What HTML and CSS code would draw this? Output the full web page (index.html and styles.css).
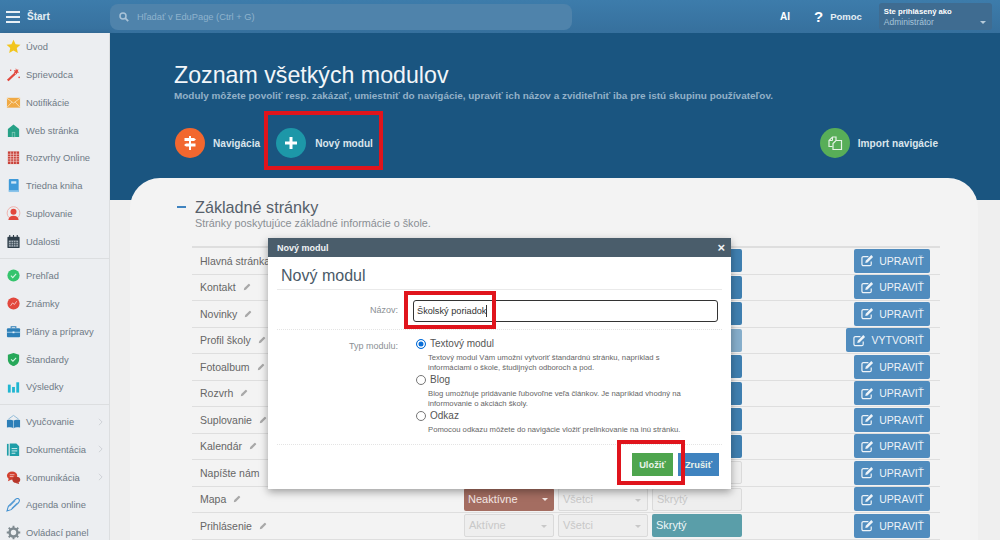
FILE: index.html
```html
<!DOCTYPE html>
<html lang="sk">

<head>
    <meta charset="UTF-8">
    <meta name="viewport" content="width=device-width, initial-scale=1.0">
    <title>Zoznam všetkých modulov</title>
    <link rel="stylesheet" href="styles.css">
</head>

<body>
    <svg class="defs" width="0" height="0">
        <symbol id="pencil" viewBox="0 0 10 10">
            <path d="M1 9l.6-2.6L6.8 1.2a.8.8 0 0 1 1.1 0l.9.9a.8.8 0 0 1 0 1.1L3.6 8.4z" fill="currentColor" />
        </symbol>
        <symbol id="edit" viewBox="0 0 14 14">
            <path d="M11 8v3a1.6 1.6 0 0 1-1.6 1.6H2.6A1.6 1.6 0 0 1 1 11V4.4a1.6 1.6 0 0 1 1.6-1.6H8" fill="none" stroke="currentColor" stroke-width="1.3" />
            <path d="M4.6 9.6l.5-2.4 6-6 1.9 1.9-6 6z" fill="currentColor" />
        </symbol>
        <symbol id="chev" viewBox="0 0 6 10">
            <path d="M1 1l4 4-4 4" fill="none" stroke="currentColor" stroke-width="1" />
        </symbol>
    </svg>

    <div class="page">
        <header class="topbar">
            <div class="brand">
                <span class="burger"><i></i><i></i><i></i></span>
                <span class="brand-name">Štart</span>
            </div>
            <div class="search">
                <svg width="10" height="10" viewBox="0 0 10 10">
                    <circle cx="4" cy="4" r="3" fill="none" stroke="#a9c3d8" stroke-width="1.5" />
                    <path d="M6.2 6.2L9.2 9.2" stroke="#a9c3d8" stroke-width="1.8" />
                </svg>
                <span>Hľadať v EduPage (Ctrl + G)</span>
            </div>
            <span class="top-ai">AI</span>
            <span class="top-q">?</span>
            <span class="top-help">Pomoc</span>
            <div class="user">
                <b>Ste prihlásený ako</b>
                <span>Administrátor</span>
                <em class="user-caret"></em>
            </div>
        </header>

        <div class="layout">
            <nav class="side">
                <div class="side-group">
                    <a class="side-item">
                        <svg viewBox="0 0 16 16"><path d="M8 .8l2.2 4.8 5.2.6-3.9 3.5 1.1 5.2L8 12.3l-4.6 2.6 1.1-5.2L.6 6.2l5.2-.6z" fill="#f2c51d" /></svg>
                        Úvod
                    </a>
                    <a class="side-item">
                        <svg viewBox="0 0 16 16"><path d="M1 13.6L9 6l1.7 1.7L2.7 15.3z" fill="#e2483d" /><path d="M10.5 1l.8 2 2-.4-.8 2 1.6 1.3-2.1.2-.6 2-1.2-1.7-2.1.3 1.2-1.7-1-1.9 2 .6z" fill="#e2483d" /><circle cx="14" cy="11" r=".9" fill="#e2483d" /><circle cx="5" cy="3.5" r=".8" fill="#e2483d" /></svg>
                        Sprievodca
                    </a>
                    <a class="side-item">
                        <svg viewBox="0 0 16 16"><rect x="1" y="3" width="14" height="10.5" fill="#f0a944" /><path d="M1 3.4l7 5.2 7-5.2M1 13.2l5.2-5.6M15 13.2L9.8 7.6" fill="none" stroke="#fbe3bd" stroke-width=".9" /></svg>
                        Notifikácie
                    </a>
                    <a class="side-item">
                        <svg viewBox="0 0 16 16"><path d="M8 1.5l6 5V15H2V6.5z" fill="#27a187" /><rect x="6.2" y="9.5" width="3.6" height="5.5" fill="#7cc8b6" /><rect x="7.1" y="10.5" width="1.8" height="4.5" fill="#27a187" /></svg>
                        Web stránka
                    </a>
                    <a class="side-item">
                        <svg viewBox="0 0 16 16"><rect x="2" y="1.5" width="12" height="13.5" fill="#c9423a" /><path d="M2 4.5h12M2 7h12M2 9.500h12M2 12h12M5 1.5V15M8 1.5V15M11 1.5V15" stroke="#f3d3d0" stroke-width=".7" /></svg>
                        Rozvrhy Online
                    </a>
                    <a class="side-item">
                        <svg viewBox="0 0 16 16"><rect x="3" y="1" width="10.5" height="14" rx="1" fill="#3f9ad9" /><rect x="5.5" y="3.5" width="5.5" height="2.5" fill="#cfe7f7" /><rect x="3" y="13" width="10.5" height="2" fill="#8cc4ea" /></svg>
                        Triedna kniha
                    </a>
                    <a class="side-item">
                        <svg viewBox="0 0 16 16"><circle cx="8" cy="7.5" r="6.8" fill="none" stroke="#efb0aa" stroke-width="1" /><circle cx="8" cy="6" r="3.2" fill="#e2483d" /><path d="M2.5 15c.4-3 2.5-4.5 5.5-4.5s5.1 1.5 5.5 4.5z" fill="#e2483d" /></svg>
                        Suplovanie
                    </a>
                    <a class="side-item">
                        <svg viewBox="0 0 16 16"><rect x="1.5" y="3" width="13" height="12" rx="1" fill="#2e3d49" /><rect x="3" y="7" width="10" height="6.5" fill="#aab4bc" /><path d="M5.5 7v6.5M8 7v6.5M10.5 7v6.5M3 9.2h10M3 11.4h10" stroke="#2e3d49" stroke-width=".7" /><path d="M4 1v3M8 1v3M12 1v3" stroke="#2e3d49" stroke-width="1.2" /></svg>
                        Udalosti
                    </a>
                </div>
                <div class="side-group">
                    <a class="side-item">
                        <svg viewBox="0 0 16 16"><circle cx="8" cy="8" r="6.5" fill="#35c46d" /><path d="M5.2 8.2l2 2 3.6-4" fill="none" stroke="#d8f5e3" stroke-width="1.2" /></svg>
                        Prehľad
                    </a>
                    <a class="side-item">
                        <svg viewBox="0 0 16 16"><circle cx="8" cy="8" r="6.5" fill="#e2483d" /><path d="M4.8 10.4L7 7.4l2 1.6 2.4-3.4" fill="none" stroke="#f7c9c5" stroke-width="1" /></svg>
                        Známky
                    </a>
                    <a class="side-item">
                        <svg viewBox="0 0 16 16"><rect x="1" y="4.5" width="14" height="9.5" rx="1" fill="#2d7fb8" /><path d="M5.5 4.5V3h5v1.500" fill="none" stroke="#2d7fb8" stroke-width="1.1" /><path d="M1 8.8h14" stroke="#a8d0ea" stroke-width="1" /><rect x="7" y="8" width="2" height="1.8" fill="#e3f0f8" /></svg>
                        Plány a prípravy
                    </a>
                    <a class="side-item">
                        <svg viewBox="0 0 16 16"><path d="M8 1l6 2v5c0 3.5-2.5 6-6 7-3.5-1-6-3.5-6-7V3z" fill="#27a85a" /><path d="M5.4 7.8l2 2 3.4-3.6" fill="none" stroke="#d8f5e3" stroke-width="1.1" /></svg>
                        Štandardy
                    </a>
                    <a class="side-item">
                        <svg viewBox="0 0 16 16"><rect x="2" y="6" width="3" height="8.5" fill="#1fb6d1" /><rect x="6.5" y="8.5" width="3" height="6" fill="#1fb6d1" /><rect x="11" y="3.5" width="3" height="11" fill="#1fb6d1" /></svg>
                        Výsledky
                    </a>
                </div>
                <div class="side-group">
                    <a class="side-item">
                        <svg viewBox="0 0 16 16"><path d="M1 6.5c3-.8 5.500-.6 7 .6 1.5-1.2 4-1.4 7-.6v8c-3-.8-5.5-.6-7 .6-1.5-1.2-4-1.4-7-.6z" fill="#2d7fb8" /><path d="M8 7v8" stroke="#cfe3f0" stroke-width=".7" /><path d="M2.5 5.5L8 1.5l5.5 4" fill="none" stroke="#8db9d6" stroke-width="1" /></svg>
                        Vyučovanie
                        <svg class="side-chev"><use href="#chev" /></svg>
                    </a>
                    <a class="side-item">
                        <svg viewBox="0 0 16 16"><rect x="1" y="2" width="1.8" height="12.5" fill="#1f9ea8" /><path d="M4 1.5h7l3 3V15H4z" fill="#1f9ea8" /><path d="M6 7h6M6 9.5h6M6 12h4" stroke="#d5eff1" stroke-width="1" /></svg>
                        Dokumentácia
                        <svg class="side-chev"><use href="#chev" /></svg>
                    </a>
                    <a class="side-item">
                        <svg viewBox="0 0 16 16"><ellipse cx="6.5" cy="6" rx="5.5" ry="4.5" fill="#d2402f" /><path d="M3 9l-1 3 4-2z" fill="#d2402f" /><ellipse cx="11" cy="10.5" rx="4.2" ry="3.3" fill="#b8372b" /><path d="M13 13l1.5 1.8-4-1z" fill="#b8372b" /><path d="M4 5h5M4 7h4" stroke="#f7d2cd" stroke-width=".8" /></svg>
                        Komunikácia
                        <svg class="side-chev"><use href="#chev" /></svg>
                    </a>
                    <a class="side-item">
                        <svg viewBox="0 0 16 16"><path d="M1 15l1.5-5L10 2.5c1.5-1.5 3.5-1.2 4 0s.5 2.5-1 4L5.5 13.5z" fill="none" stroke="#3f8fd0" stroke-width="1.1" /><path d="M4 10l6-6M6 12l6-6" stroke="#3f8fd0" stroke-width=".8" /></svg>
                        Agenda online
                    </a>
                    <a class="side-item">
                        <svg viewBox="0 0 16 16"><circle cx="8" cy="8" r="4.2" fill="none" stroke="#7f8a90" stroke-width="2.6" /><path d="M8 .8v3M8 12.2v3M.8 8h3M12.2 8h3M2.9 2.9L5 5M11 11l2.1 2.1M13.1 2.9L11 5M5 11l-2.1 2.1" stroke="#7f8a90" stroke-width="2" /></svg>
                        Ovládací panel
                    </a>
                </div>
            </nav>

            <main class="main">
                <div class="hero">
                    <h1>Zoznam všetkých modulov</h1>
                    <p>Moduly môžete povoliť resp. zakázať, umiestniť do navigácie, upraviť ich názov a zviditeľniť iba pre istú skupinu používateľov.</p>
                    <div class="actions">
                        <a class="action">
                            <span class="action-ico orange">
                                <svg width="18" height="18" viewBox="0 0 18 18"><path d="M8 2h2v14H8z" fill="#fff" /><path d="M3.5 4H13l2 1.5L13 7H3.5zM14.5 9.5H5L3 11l2 1.5h9.5z" fill="#fff" /></svg>
                            </span>
                            Navigácia
                        </a>
                        <a class="action">
                            <span class="action-ico teal">
                                <svg width="12" height="12" viewBox="0 0 12 12"><path d="M4.5 0h3v4.5H12v3H7.5V12h-3V7.5H0v-3h4.5z" fill="#fff" /></svg>
                            </span>
                            Nový modul
                        </a>
                        <a class="action action-right">
                            <span class="action-ico green">
                                <svg width="16" height="16" viewBox="0 0 16 16"><path d="M5.5 11.5H2v-6L5.5 2H9v3.5" fill="none" stroke="#e6f3e6" stroke-width="1.2" /><path d="M5.5 2v3.500H2" fill="none" stroke="#e6f3e6" stroke-width="1" /><path d="M9 5.5h5.5v9H6v-6z" fill="none" stroke="#e6f3e6" stroke-width="1.2" /></svg>
                            </span>
                            Import navigácie
                        </a>
                    </div>
                </div>

                <section class="card">
                    <div class="sec-head">
                        <span class="sec-dash"></span>
                        <h2>Základné stránky</h2>
                    </div>
                    <p class="sec-sub">Stránky poskytujúce základné informácie o škole.</p>

                    <div class="rows">
                        <div class="row">
                            <span class="name">Hlavná stránka</span>
                            <span></span><span></span>
                            <span class="sel on"></span>
                            <a class="btn"><svg><use href="#edit" /></svg>UPRAVIŤ</a>
                        </div>
                        <div class="row">
                            <span class="name">Kontakt <svg class="pen"><use href="#pencil" /></svg></span>
                            <span></span><span></span>
                            <span class="sel on"></span>
                            <a class="btn"><svg><use href="#edit" /></svg>UPRAVIŤ</a>
                        </div>
                        <div class="row">
                            <span class="name">Novinky <svg class="pen"><use href="#pencil" /></svg></span>
                            <span></span><span></span>
                            <span class="sel on"></span>
                            <a class="btn"><svg><use href="#edit" /></svg>UPRAVIŤ</a>
                        </div>
                        <div class="row">
                            <span class="name">Profil školy <svg class="pen"><use href="#pencil" /></svg></span>
                            <span></span><span></span>
                            <span class="sel pale"></span>
                            <a class="btn"><svg><use href="#edit" /></svg>VYTVORIŤ</a>
                        </div>
                        <div class="row">
                            <span class="name">Fotoalbum <svg class="pen"><use href="#pencil" /></svg></span>
                            <span></span><span></span>
                            <span class="sel on"></span>
                            <a class="btn"><svg><use href="#edit" /></svg>UPRAVIŤ</a>
                        </div>
                        <div class="row">
                            <span class="name">Rozvrh <svg class="pen"><use href="#pencil" /></svg></span>
                            <span></span><span></span>
                            <span class="sel on"></span>
                            <a class="btn"><svg><use href="#edit" /></svg>UPRAVIŤ</a>
                        </div>
                        <div class="row">
                            <span class="name">Suplovanie <svg class="pen"><use href="#pencil" /></svg></span>
                            <span></span><span></span>
                            <span class="sel on"></span>
                            <a class="btn"><svg><use href="#edit" /></svg>UPRAVIŤ</a>
                        </div>
                        <div class="row">
                            <span class="name">Kalendár <svg class="pen"><use href="#pencil" /></svg></span>
                            <span></span><span></span>
                            <span class="sel on"></span>
                            <a class="btn"><svg><use href="#edit" /></svg>UPRAVIŤ</a>
                        </div>
                        <div class="row">
                            <span class="name">Napíšte nám</span>
                            <span></span><span></span>
                            <span class="sel off"></span>
                            <a class="btn"><svg><use href="#edit" /></svg>UPRAVIŤ</a>
                        </div>
                        <div class="row">
                            <span class="name">Mapa <svg class="pen"><use href="#pencil" /></svg></span>
                            <span class="sel danger caret">Neaktívne</span>
                            <span class="sel off caret">Všetci</span>
                            <span class="sel off">Skrytý</span>
                            <a class="btn"><svg><use href="#edit" /></svg>UPRAVIŤ</a>
                        </div>
                        <div class="row">
                            <span class="name">Prihlásenie <svg class="pen"><use href="#pencil" /></svg></span>
                            <span class="sel off caret">Aktívne</span>
                            <span class="sel off caret">Všetci</span>
                            <span class="sel hidden">Skrytý</span>
                            <a class="btn"><svg><use href="#edit" /></svg>UPRAVIŤ</a>
                        </div>
                    </div>
                </section>
            </main>
        </div>

        <!-- dialog -->
        <div class="modal">
            <div class="modal-bar">
                <span>Nový modul</span>
                <span class="modal-x">×</span>
            </div>
            <h3>Nový modul</h3>
            <div class="form-row name-row">
                <label>Názov:</label>
                <div class="field">Školský poriadok<i class="cursor"></i></div>
            </div>
            <div class="form-row type-row">
                <label>Typ modulu:</label>
                <div class="options">
                    <div class="opt">
                        <span class="radio checked"></span>
                        <div>
                            <div class="opt-title">Textový modul</div>
                            <p>Textový modul Vám umožní vytvoriť štandardnú stránku, napríklad s informáciami o škole, študijných odboroch a pod.</p>
                        </div>
                    </div>
                    <div class="opt">
                        <span class="radio"></span>
                        <div>
                            <div class="opt-title">Blog</div>
                            <p>Blog umožňuje pridávanie ľubovoľne veľa článkov. Je napríklad vhodný na informovanie o akciách školy.</p>
                        </div>
                    </div>
                    <div class="opt">
                        <span class="radio"></span>
                        <div>
                            <div class="opt-title">Odkaz</div>
                            <p>Pomocou odkazu môžete do navigácie vložiť prelinkovanie na inú stránku.</p>
                        </div>
                    </div>
                </div>
            </div>
            <div class="modal-foot">
                <a class="mbtn save">Uložiť</a>
                <a class="mbtn cancel">Zrušiť</a>
            </div>
        </div>

        <!-- red marks drawn over the screenshot -->
        <div class="mark mark-new"></div>
        <div class="mark mark-name"></div>
        <div class="mark mark-save"></div>
    </div>
</body>

</html>
```

FILE: styles.css
```css
* {
    margin: 0;
    padding: 0;
    box-sizing: border-box;
}

body {
    font-family: "Liberation Sans", Arial, sans-serif;
    background: #efefef;
}

.defs {
    position: absolute;
}

.page {
    position: relative;
    width: 1000px;
    height: 540px;
    overflow: hidden;
}

/* top bar */
.topbar {
    display: flex;
    align-items: center;
    height: 33px;
    background: linear-gradient(#3d7cab, #36709d);
    color: #fff;
}

.brand {
    display: flex;
    align-items: center;
    width: 110px;
    padding-left: 6px;
}

.burger {
    display: flex;
    flex-direction: column;
    gap: 3px;
    width: 14px;
    margin-right: 7px;
}

.burger i {
    display: block;
    height: 2px;
    background: #e8f0f6;
}

.brand-name {
    font-size: 10px;
    font-weight: bold;
    color: #e4edf3;
}

.search {
    display: flex;
    align-items: center;
    gap: 8px;
    width: 462px;
    height: 26px;
    padding-left: 9px;
    border-radius: 8px;
    background: #4f83ab;
    font-size: 9.3px;
    color: #8fb3cd;
}

.top-ai {
    margin-left: 208px;
    font-size: 10px;
    font-weight: bold;
}

.top-q {
    margin-left: 24px;
    font-size: 15px;
    font-weight: bold;
}

.top-help {
    margin-left: 7px;
    font-size: 9.5px;
    font-weight: bold;
    color: #e4edf3;
}

.user {
    position: relative;
    display: flex;
    flex-direction: column;
    justify-content: center;
    width: 113px;
    height: 27px;
    margin-left: 17px;
    padding-left: 5px;
    border-radius: 3px;
    background: #3f6c91;
    font-size: 7.7px;
    line-height: 11px;
}

.user span {
    font-size: 8.5px;
    color: #a6c4da;
}

.user-caret {
    position: absolute;
    right: 6px;
    bottom: 6px;
    border: 3px solid transparent;
    border-top: 3px solid #b7cbda;
    border-bottom: 0;
}

.layout {
    display: flex;
    height: 507px;
}

/* sidebar */
.side {
    width: 110px;
    flex: none;
    background: #eceef1;
    border-right: 1px solid #dcdee0;
    box-shadow: 1px 0 4px rgba(0, 0, 0, .12);
}

.side-group {
    padding: 3px 0;
    border-bottom: 1px solid #dcdee0;
}

.side-group:first-child {
    padding-top: 0;
}

.side-group:last-child {
    border-bottom: 0;
}

.side-item {
    display: flex;
    align-items: center;
    height: 27.75px;
    padding-left: 6px;
    font-size: 9.4px;
    color: #6f7a86;
}

.side-item > svg:first-child {
    flex: none;
    width: 15px;
    height: 15px;
    margin-right: 5px;
}

.side-chev {
    width: 5px;
    height: 8px;
    margin-left: auto;
    margin-right: 6px;
    color: #c8ccd0;
}

/* main area */
.main {
    flex: 1;
    padding: 0 22px 0 20px;
    background: linear-gradient(#1a5580 167px, #efefef 167px);
}

.hero {
    height: 145px;
    padding: 28px 0 0 44px;
}

.hero h1 {
    font-size: 23.2px;
    line-height: 28px;
    font-weight: normal;
    color: #f2f6f9;
}

.hero p {
    margin-top: 1px;
    font-size: 9.95px;
    line-height: 12px;
    font-weight: bold;
    color: #93b1c8;
}

.actions {
    display: flex;
    align-items: center;
    margin-top: 26px;
    padding-left: 1px;
}

.action {
    display: flex;
    align-items: center;
    margin-right: 16px;
    font-size: 10.1px;
    font-weight: bold;
    color: #dbe5ec;
}

.action:nth-child(2) .action-ico {
    margin-right: 9px;
}

.action-right {
    margin-left: auto;
    margin-right: 40px;
}

.action-ico {
    display: flex;
    align-items: center;
    justify-content: center;
    width: 30px;
    height: 30px;
    margin-right: 8px;
    border-radius: 50%;
}

.orange {
    background: #f2672f;
}

.teal {
    background: #1d97a8;
}

.green {
    background: #58ae58;
}

.card {
    height: 380px;
    padding: 20px 38px 0 62px;
    border-radius: 30px 30px 0 0;
    background: #f3f3f3;
}

.sec-head {
    display: flex;
    align-items: center;
    margin: 0 0 1px -15px;
}

.sec-dash {
    width: 9px;
    height: 2px;
    margin-right: 9px;
    background: #3f83bf;
}

.sec-head h2 {
    font-size: 16.2px;
    line-height: 18px;
    font-weight: normal;
    color: #56606a;
}

.sec-sub {
    margin: 0 0 17px 3px;
    font-size: 10.8px;
    line-height: 12px;
    color: #8a8f94;
}

.rows {
    border-top: 2px solid #dedede;
}

.row {
    display: grid;
    grid-template-columns: 268px 90px 90px 90px 1fr;
    column-gap: 4px;
    align-items: center;
    height: 26.5px;
    border-bottom: 1px solid #dedede;
}

.name {
    padding-left: 8px;
    font-size: 10.5px;
    color: #666;
}

.pen {
    width: 8px;
    height: 8px;
    margin-left: 4px;
    color: #a8a8a8;
}

.sel {
    position: relative;
    display: block;
    height: 23px;
    padding-left: 4px;
    border: 1px solid #dadada;
    border-radius: 2px;
    font-size: 11px;
    line-height: 21px;
}

.sel.on {
    border: 0;
    background: #3f7fb0;
}

.sel.pale {
    border: 0;
    background: #86aecb;
}

.sel.off {
    background: #eeeeee;
    color: #c8c8c8;
}

.sel.danger {
    border: 0;
    line-height: 23px;
    background: #a46d61;
    color: #f5e9e6;
}

.sel.hidden {
    border: 0;
    line-height: 23px;
    background: #5a9ea9;
    color: #eef6f7;
}

.caret::after {
    content: "";
    position: absolute;
    right: 6px;
    top: 10px;
    border: 3px solid transparent;
    border-top: 3px solid currentColor;
    border-bottom: 0;
}

.btn {
    display: flex;
    align-items: center;
    justify-self: end;
    height: 24px;
    margin-right: 10px;
    padding: 0 6px 0 7px;
    border-radius: 2px;
    background: #508cbe;
    font-size: 10.5px;
    color: #edf3f8;
}

.btn svg {
    width: 13px;
    height: 13px;
    margin-right: 5px;
}

/* dialog */
.modal {
    position: absolute;
    left: 268px;
    top: 238px;
    width: 463px;
    height: 251px;
    background: #fff;
    box-shadow: 0 3px 8px rgba(0, 0, 0, .35);
}

.modal-bar {
    display: flex;
    justify-content: space-between;
    align-items: center;
    height: 19px;
    padding: 0 6px 0 9px;
    background: #4a5d6b;
    font-size: 9px;
    font-weight: bold;
    color: #f0f3f5;
}

.modal-x {
    font-size: 13px;
}

.modal h3 {
    height: 33px;
    margin: 0 9px;
    padding: 9px 4px 0;
    border-bottom: 1px solid #eaeaea;
    font-size: 16px;
    line-height: 19px;
    font-weight: normal;
    color: #4a5a68;
}

.form-row {
    display: flex;
    margin: 0 9px;
}

.form-row label {
    flex: none;
    width: 121px;
    margin-right: 15px;
    font-size: 9px;
    color: #8a8f94;
    text-align: right;
}

.name-row {
    align-items: center;
    height: 40px;
    border-bottom: 1px dotted #e4e4e4;
}

.field {
    display: flex;
    align-items: center;
    width: 305px;
    height: 22px;
    margin-top: 2px;
    padding-left: 3px;
    border: 1px solid #333;
    border-radius: 3px;
    font-size: 9.2px;
    color: #333;
}

.cursor {
    width: 1px;
    height: 12px;
    background: #333;
}

.type-row {
    height: 115px;
    padding-top: 8px;
    border-bottom: 1px dotted #e4e4e4;
}

.type-row label {
    padding-top: 3px;
}

.options {
    display: flex;
    flex-direction: column;
    gap: 1px;
    margin-left: 2px;
}

.opt {
    display: flex;
}

.opt > div {
    margin-left: 3px;
}

.radio {
    flex: none;
    width: 10px;
    height: 10px;
    margin: 1px -1px 0 1px;
    border: 1px solid #767676;
    border-radius: 50%;
    background: #fff;
}

.radio.checked {
    border: 1px solid #0a6fd8;
    box-shadow: inset 0 0 0 1.5px #fff;
    background: #0a6fd8;
}

.opt-title {
    margin-left: 2px;
    font-size: 10px;
    line-height: 12px;
    color: #555;
}

.opt p {
    width: 258px;
    margin-top: 3px;
    font-size: 7.7px;
    line-height: 10px;
    color: #666;
}

.modal-foot {
    display: flex;
    justify-content: flex-end;
    gap: 5px;
    padding: 8px 12px 0 0;
}

.mbtn {
    display: flex;
    align-items: center;
    justify-content: center;
    width: 41px;
    height: 23px;
    font-size: 9.3px;
    font-weight: bold;
    color: #eaf3ea;
}

.save {
    background: #4ea54e;
}

.cancel {
    background: #3f83bf;
}

/* red marks */
.mark {
    position: absolute;
    border: 4px solid #e0141c;
}

.mark-new {
    left: 264px;
    top: 111px;
    width: 119px;
    height: 59px;
}

.mark-name {
    left: 404px;
    top: 291px;
    width: 92px;
    height: 38px;
}

.mark-save {
    left: 617px;
    top: 440px;
    width: 68px;
    height: 45px;
}
```
